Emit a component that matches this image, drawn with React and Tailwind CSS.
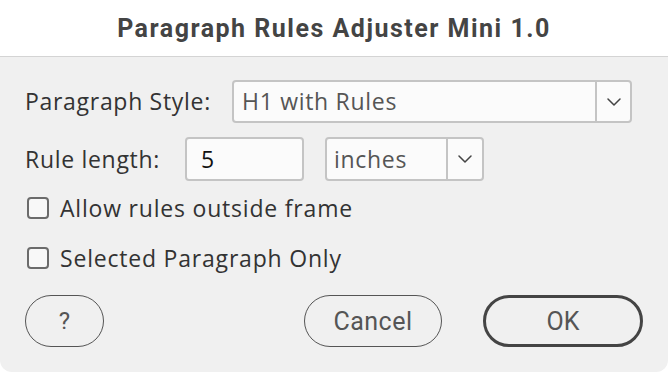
import { useState } from 'react';

const Chevron = () => (
  <svg width="14" height="8" viewBox="0 0 14 8" fill="none">
    <path d="M1 1l6 6 6-6" stroke="#444" strokeWidth="1.5" strokeLinecap="round" strokeLinejoin="round" />
  </svg>
);

const Checkbox = ({ label, checked, onChange }) => (
  <label className="flex items-center gap-[11px] h-[22px] cursor-pointer">
    <span
      onClick={onChange}
      className="w-[22px] h-[22px] rounded-[4px] border-2 border-[#6b6b6b] bg-[#f8f8f8]"
    />
    <span className="text-[23px] leading-none tracking-[0.8px] text-[#333]">{label}</span>
  </label>
);

export default function App() {
  const [allowOutside, setAllowOutside] = useState(false);
  const [selectedOnly, setSelectedOnly] = useState(false);

  return (
    <div className="w-[668px] h-[372px] bg-white" style={{ fontFamily: '"Open Sans", "Noto Sans", sans-serif' }}>
      <div className="h-full flex flex-col bg-[#f0f0f0] rounded-b-[12px] overflow-hidden">
        {/* Title bar */}
        <div className="h-[57px] shrink-0 bg-white border-b border-[#d4d4d4] flex items-center justify-center">
          <h1 className="text-[25px] leading-none font-bold tracking-[1.5px] text-[#444]" style={{ fontFamily: 'Roboto, sans-serif' }}>
            Paragraph Rules Adjuster Mini 1.0
          </h1>
        </div>

        <div className="flex flex-col px-[25px] pt-[23px]">
          {/* Paragraph style */}
          <div className="flex items-center h-[43px]">
            <span className="text-[23px] leading-none tracking-[0.7px] text-[#333] w-[207px]">Paragraph Style:</span>
            <div className="w-[400px] h-[43px] flex border-2 border-[#c4c4c4] rounded-[4px] bg-[#fbfbfb]">
              <div className="flex-1 flex items-center pl-[8px] text-[23px] leading-none tracking-[0.7px] text-[#555]">H1 with Rules</div>
              <div className="w-[35px] border-l-2 border-[#c4c4c4] flex items-center justify-center">
                <Chevron />
              </div>
            </div>
          </div>

          {/* Rule length */}
          <div className="flex items-center h-[44px] mt-[14px]">
            <span className="text-[23px] leading-none tracking-[0.7px] text-[#333] w-[160px]">Rule length:</span>
            <div className="w-[119px] h-[44px] border-2 border-[#c4c4c4] rounded-[4px] bg-[#fbfbfb] flex items-center pl-[14px] text-[23px] leading-none text-[#111]">
              5
            </div>
            <div className="ml-[21px] w-[159px] h-[44px] flex border-2 border-[#c4c4c4] rounded-[4px] bg-[#fbfbfb]">
              <div className="flex-1 flex items-center pl-[7px] text-[23px] leading-none tracking-[0.7px] text-[#555]">inches</div>
              <div className="w-[36px] border-l-2 border-[#c4c4c4] flex items-center justify-center">
                <Chevron />
              </div>
            </div>
          </div>

          {/* Checkboxes */}
          <div className="flex flex-col gap-[28px] mt-[16px] pl-[2px]">
            <Checkbox label="Allow rules outside frame" checked={allowOutside} onChange={() => setAllowOutside(!allowOutside)} />
            <Checkbox label="Selected Paragraph Only" checked={selectedOnly} onChange={() => setSelectedOnly(!selectedOnly)} />
          </div>

          {/* Buttons */}
          <div className="flex items-center mt-[26px]" style={{ fontFamily: 'Roboto, sans-serif' }}>
            <button className="w-[79px] h-[52px] rounded-full border-[1.5px] border-[#555] text-[24px] leading-none text-[#555]">?</button>
            <button className="ml-auto w-[138px] h-[52px] rounded-full border-[1.5px] border-[#555] text-[25px] leading-none tracking-[0.5px] text-[#555]">Cancel</button>
            <button className="ml-[41px] w-[160px] h-[52px] rounded-full border-[3px] border-[#444] text-[25px] leading-none text-[#555]">OK</button>
          </div>
        </div>
      </div>
    </div>
  );
}
